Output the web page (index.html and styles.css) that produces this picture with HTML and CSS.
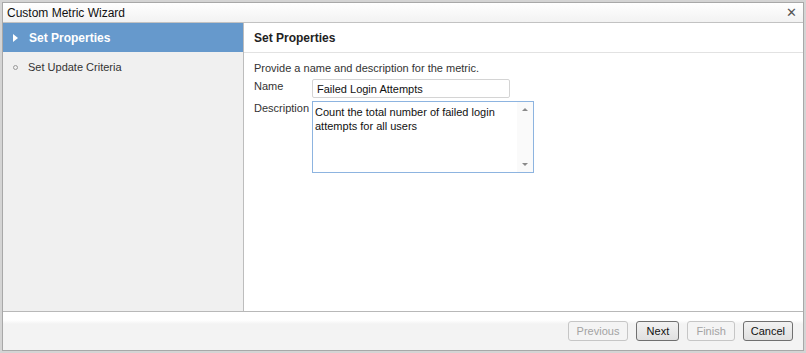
FILE: index.html
```html
<!DOCTYPE html>
<html lang="en">

<head>
    <meta charset="UTF-8">
    <title>Custom Metric Wizard</title>
    <link rel="stylesheet" href="styles.css">
</head>

<body>
    <div class="window">
        <div class="titlebar">
            <span>Custom Metric Wizard</span>
            <span class="close">&#x2715;</span>
        </div>

        <div class="main">
            <div class="sidebar">
                <div class="step active">
                    <span class="marker arrow"></span>
                    <span>Set Properties</span>
                </div>
                <div class="step">
                    <span class="marker dot"></span>
                    <span>Set Update Criteria</span>
                </div>
            </div>

            <div class="content">
                <div class="content-header">Set Properties</div>
                <div class="content-body">
                    <p class="intro">Provide a name and description for the metric.</p>
                    <div class="field">
                        <label class="field-label">Name</label>
                        <div class="input">Failed Login Attempts</div>
                    </div>
                    <div class="field">
                        <label class="field-label">Description</label>
                        <div class="textarea">
                            <div class="textarea-text">Count the total number of failed login attempts for all users</div>
                            <div class="scrollbar">
                                <span class="scroll-up"></span>
                                <span class="scroll-down"></span>
                            </div>
                        </div>
                    </div>
                </div>
            </div>
        </div>

        <div class="footer">
            <button class="btn" disabled>Previous</button>
            <button class="btn">Next</button>
            <button class="btn" disabled>Finish</button>
            <button class="btn">Cancel</button>
        </div>
    </div>
</body>

</html>
```

FILE: styles.css
```css
body {
    margin: 0;
    padding: 2px;
    background: #d4d4d4;
    font-family: "Liberation Sans", Arial, sans-serif;
    font-size: 11px;
    color: #222;
    width: 806px;
    height: 353px;
    box-sizing: border-box;
    overflow: hidden;
}

.window {
    height: 349px;
    box-sizing: border-box;
    border: 1px solid #a8a8a8;
    background: #fff;
    display: flex;
    flex-direction: column;
}

.titlebar {
    height: 19px;
    border-bottom: 1px solid #c2c2c2;
    background: linear-gradient(#ffffff, #f2f2f2);
    display: flex;
    align-items: center;
    justify-content: space-between;
    padding: 0 6px 0 4px;
    font-size: 12px;
    color: #111;
}

.close {
    font-size: 13px;
    color: #555;
}

.main {
    flex: 1;
    display: flex;
}

.sidebar {
    width: 240px;
    background: #f0f0f0;
    border-right: 1px solid #bdbdbd;
}

.step {
    height: 30px;
    display: flex;
    align-items: center;
    font-size: 11px;
    color: #333;
}

.step.active {
    background: #6699cc;
    color: #fff;
    font-weight: bold;
    font-size: 12px;
    height: 29px;
}

.marker {
    width: 25px;
    display: flex;
    justify-content: center;
}

.active .marker {
    margin-right: 1px;
}

.arrow::before {
    content: "";
    border-left: 5px solid #fff;
    border-top: 4px solid transparent;
    border-bottom: 4px solid transparent;
}

.dot::before {
    content: "";
    width: 3px;
    height: 3px;
    border: 1px solid #999;
    border-radius: 50%;
}

.content {
    flex: 1;
}

.content-header {
    height: 29px;
    border-bottom: 1px solid #e2e2e2;
    display: flex;
    align-items: center;
    padding-left: 10px;
    font-size: 12px;
    font-weight: bold;
    color: #222;
}

.content-body {
    padding: 8px 10px;
}

.intro {
    margin: 0 0 4px;
    line-height: 14px;
    color: #333;
}

.field {
    display: flex;
    align-items: flex-start;
    margin-bottom: 3px;
}

.field-label {
    width: 58px;
    line-height: 14px;
    color: #333;
}

.input {
    width: 188px;
    height: 17px;
    border: 1px solid #d4d4d4;
    border-radius: 2px;
    padding: 0 4px;
    line-height: 18px;
    color: #111;
}

.textarea {
    width: 220px;
    height: 70px;
    border: 1px solid #8db4e0;
    display: flex;
}

.textarea-text {
    flex: 1;
    padding: 3px 2px;
    line-height: 14px;
    color: #111;
}

.scrollbar {
    width: 16px;
    display: flex;
    flex-direction: column;
    justify-content: space-between;
    align-items: center;
    padding: 6px 0;
    background: #fafafa;
}

.scroll-up {
    border-bottom: 3px solid #8a8a8a;
    border-left: 3px solid transparent;
    border-right: 3px solid transparent;
}

.scroll-down {
    border-top: 3px solid #8a8a8a;
    border-left: 3px solid transparent;
    border-right: 3px solid transparent;
}

.footer {
    height: 38px;
    border-top: 1px solid #b8b8b8;
    background: linear-gradient(#ffffff 0, #ffffff 8px, #f3f3f3 12px, #f3f3f3);
    display: flex;
    justify-content: flex-end;
    align-items: center;
    gap: 8px;
    padding-right: 10px;
}

.btn {
    height: 20px;
    min-width: 43px;
    padding: 0 7px;
    border: 1px solid #707070;
    border-radius: 3px;
    background: linear-gradient(#f2f2f2, #e0e0e0);
    font-family: "Liberation Sans", Arial, sans-serif;
    font-size: 11px;
    color: #111;
}

.btn:disabled {
    padding: 0 8px;
    border-color: #c6c6c6;
    background: #f4f4f4;
    color: #a3a3a3;
}
```
